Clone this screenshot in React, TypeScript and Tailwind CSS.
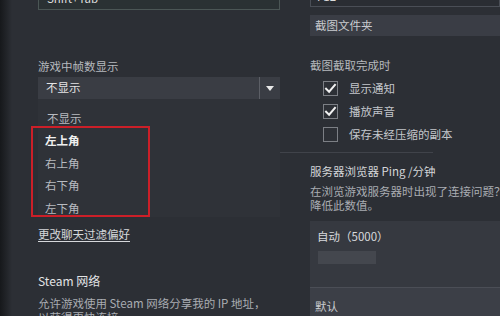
import React from "react";

const Check = () => (
  <svg viewBox="0 0 16 16" className="h-[13px] w-[13px]">
    <path d="M2.5 8.2 L6.3 12 L13.5 3.5" fill="none" stroke="#f2f2f2" strokeWidth="2.4" strokeLinecap="square" />
  </svg>
);

const CheckRow = ({ label, checked }: { label: string; checked?: boolean }) => (
  <div className="flex h-[23px] items-start">
    <div className="ml-[13px] flex h-[15px] w-[15px] items-center justify-center border border-[#7c7f85] bg-[#2d3036]">
      {checked && <Check />}
    </div>
    <span className="ml-[11px] leading-[15px] text-[#c3c6cb]">{label}</span>
  </div>
);

const options = ["左上角", "右上角", "右下角", "左下角"];

export default function App() {
  return (
    <div className="flex h-[316px] w-[500px] overflow-hidden bg-[#2c2f35] font-['Noto_Sans_CJK_SC','Noto_Sans',sans-serif] text-[11.5px]">
      <div className="w-[12px] shrink-0 bg-gradient-to-r from-[#16181b] to-[#2c2f35]" />

      {/* left column */}
      <div className="ml-[26px] flex w-[242px] shrink-0 flex-col">
        <div className="-mt-[14px] h-[24px] border border-[#4b5655] bg-[#2a3133] px-[8px] leading-[22px] text-[#dcdcdc]">
          Shift+Tab
        </div>
        <div className="mt-[48px] leading-[16px] text-[#b6b9be]">游戏中帧数显示</div>
        <div className="mt-[3px] flex h-[25px] items-center bg-[#3a3d44]">
          <span className="flex-1 pl-[8px] text-[#e4e4e4]">不显示</span>
          <div className="h-[22px] w-px bg-[#5c5f66]" />
          <svg viewBox="0 0 8 5" className="mx-[6px] h-[5px] w-[8px]">
            <path d="M0 0 H8 L4 5 Z" fill="#e8e8e8" />
          </svg>
        </div>
        <div className="relative h-[118px] bg-[#2f3238] pt-[8px]">
          <div className="flex h-[22.5px] items-center pl-[9px] text-[#b8bbc0]">不显示</div>
          {options.map((o, i) => (
            <div
              key={o}
              className={
                i === 0
                  ? "flex h-[22.5px] items-center pl-[7px] font-bold text-[#f0f0f0]"
                  : "flex h-[22.5px] items-center pl-[7px] text-[#b8bbc0]"
              }
            >
              {o}
            </div>
          ))}
          <div className="absolute left-[-7px] top-[27px] h-[91px] w-[119px] border-2 border-[#cc1f28]" />
        </div>
        <a className="mt-[9px] self-start leading-[16px] text-[#d6d8db] underline underline-offset-2">更改聊天过滤偏好</a>
        <div className="-ml-[2px] mt-[14px] h-px w-[229px] bg-[#40434a]" />
        <div className="mt-[17px] text-[12px] leading-[16px] text-[#e2e3e5]">Steam 网络</div>
        <div className="mt-[8px] whitespace-nowrap leading-[13.5px] text-[#a9acb2]">
          允许游戏使用 Steam 网络分享我的 IP 地址，
          <br />
          以获得更快连接。
        </div>
      </div>

      {/* right column */}
      <div className="ml-[30px] flex min-w-0 flex-1 flex-col">
        <div className="-mt-[14px] h-[21px] border border-[#4a4e56] bg-[#2a2d33] px-[6px] leading-[19px] text-[#dcdcdc]">
          F12
        </div>
        <div className="mt-[8px] flex h-[22px] items-center bg-[#3a3d45] pl-[5px] text-[#c9ccd0]">截图文件夹</div>
        <div className="mt-[21px] leading-[16px] text-[#b6b9be]">截图截取完成时</div>
        <div className="mt-[8px]">
          <CheckRow label="显示通知" checked />
          <CheckRow label="播放声音" checked />
          <CheckRow label="保存未经压缩的副本" />
        </div>
        <div className="-ml-[30px] mt-[2px] h-px w-[153px] bg-[#40434a]" />
        <div className="mt-[10px] leading-[16px] text-[#d3d5d8]">服务器浏览器 Ping /分钟</div>
        <div className="mt-[6px] whitespace-nowrap leading-[13.5px] text-[#a9acb2]">
          在浏览游戏服务器时出现了连接问题？请
          <br />
          降低此数值。
        </div>
        <div className="mt-[9px] flex h-[68px] flex-col bg-[#363940] pt-[7px]">
          <span className="pl-[7px] leading-[16px] text-[#d8dadd]">自动（5000）</span>
          <div className="ml-[8px] mt-[7px] h-[13px] w-[58px] bg-[#44474e]" />
        </div>
        <div className="h-[30px] border-t border-[#4b4e56] bg-[#3c3f47] pl-[5px] pt-[10px] leading-[16px] text-[#c9ccd0]">
          默认
        </div>
      </div>
    </div>
  );
}
